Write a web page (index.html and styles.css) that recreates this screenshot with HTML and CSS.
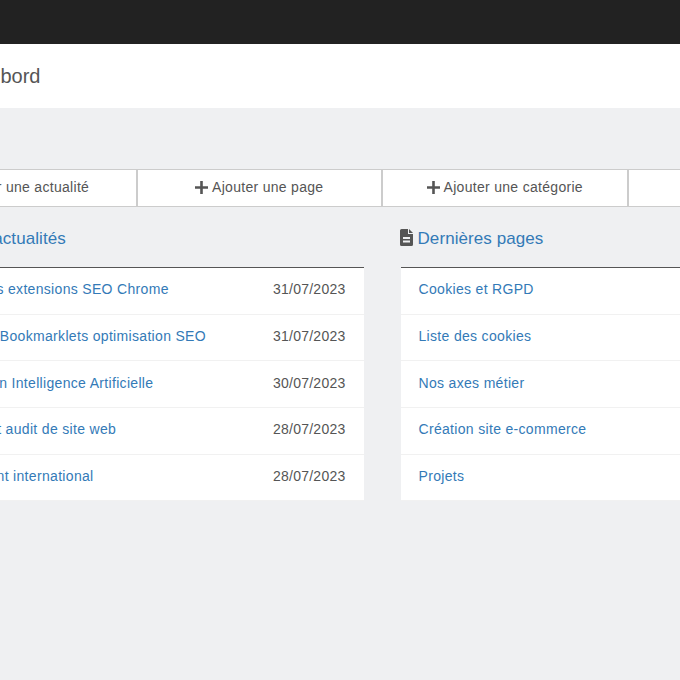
FILE: index.html
```html
<!DOCTYPE html>
<html lang="fr">
<head>
<meta charset="utf-8">
<title>Tableau de bord</title>
<link rel="stylesheet" href="styles.css">
</head>
<body>
<div class="topbar"></div>
<header class="pagehead"><h1>Tableau de bord</h1></header>
<main class="content">
  <div class="actions">
    <a class="action"><svg class="plus" viewBox="0 0 14 14"><path d="M5.600 0h2.800v5.600H14v2.800H8.400V14H5.600V8.400H0V5.600h5.600z"/></svg>Ajouter une actualité</a>
    <a class="action"><svg class="plus" viewBox="0 0 14 14"><path d="M5.600 0h2.800v5.600H14v2.800H8.400V14H5.600V8.400H0V5.600h5.600z"/></svg>Ajouter une page</a>
    <a class="action"><svg class="plus" viewBox="0 0 14 14"><path d="M5.600 0h2.800v5.600H14v2.800H8.400V14H5.600V8.400H0V5.600h5.600z"/></svg>Ajouter une catégorie</a>
    <a class="action"><svg class="plus" viewBox="0 0 14 14"><path d="M5.600 0h2.800v5.600H14v2.800H8.400V14H5.600V8.400H0V5.600h5.600z"/></svg>Ajouter un média</a>
  </div>
  <div class="columns">
    <section>
      <h2><svg class="news" viewBox="0 0 19 15"><path d="M2 1h17v14H2a2 2 0 0 1-2-2V4h2zM5 4v3h5V4zM12 4v1h5V4zM5 9v1h12V9zM5 11v1h12v-1z" fill-rule="evenodd"/></svg>Dernières actualités</h2>
      <ul class="list">
        <li><a>Les meilleures extensions SEO Chrome</a><time>31/07/2023</time></li>
        <li><a>Les meilleurs Bookmarklets optimisation SEO</a><time>31/07/2023</time></li>
        <li><a>Nouveautés en Intelligence Artificielle</a><time>30/07/2023</time></li>
        <li><a>Diagnostics et audit de site web</a><time>28/07/2023</time></li>
        <li><a>Référencement international</a><time>28/07/2023</time></li>
      </ul>
    </section>
    <section>
      <h2><svg class="doc" viewBox="0 0 13 17"><path fill-rule="evenodd" d="M0 1.500A1.500 1.500 0 0 1 1.500 0H8v5h5v10.500a1.500 1.500 0 0 1-1.500 1.500h-10A1.500 1.500 0 0 1 0 15.500zM9 0l4 4H9zM3 8v2h7V8zM3 11.500v2h7v-2z"/></svg>Dernières pages</h2>
      <ul class="list">
        <li><a>Cookies et RGPD</a></li>
        <li><a>Liste des cookies</a></li>
        <li><a>Nos axes métier</a></li>
        <li><a>Création site e-commerce</a></li>
        <li><a>Projets</a></li>
      </ul>
    </section>
  </div>
</main>
</body>
</html>
```
FILE: styles.css
```css
html, body { margin: 0; padding: 0; }
body {
  background: #eff0f2;
  font-family: "Liberation Sans", Arial, sans-serif;
  font-size: 14px;
  color: #555;
  height: 680px;
  overflow: hidden;
}
.topbar { height: 44px; background: #222; }
.pagehead { height: 64px; background: #fff; display: flex; align-items: center; }
.pagehead h1 { margin: 0 0 0 -103px; font-size: 20px; font-weight: 400; color: #555; white-space: nowrap; }
.content { margin-left: -109px; width: 982px; padding-top: 61px; }
.actions { display: grid; grid-template-columns: repeat(4, 1fr); }
.action {
  height: 38px;
  box-sizing: border-box;
  padding-bottom: 2px;
  background: #fff;
  border: 1px solid #ccc;
  display: flex;
  align-items: center;
  justify-content: center;
  color: #555;
  letter-spacing: 0.3px;
}
.plus { width: 13px; height: 13px; margin-right: 4px; fill: #555; }
.columns { display: grid; grid-template-columns: 1fr 1fr; gap: 37px; }
h2 {
  margin: 0;
  height: 60px;
  box-sizing: border-box;
  padding-top: 3px;
  font-size: 17px;
  line-height: 20px;
  font-weight: 400;
  letter-spacing: 0.08px;
  color: #337ab7;
  white-space: nowrap;
  display: flex;
  align-items: center;
}
.doc { width: 13px; height: 17px; margin: 0 5px 2px -1px; fill: #555; }
.news { width: 19px; height: 15px; margin: 0 5px 0 -1px; fill: #555; }
.list { margin: 0; padding: 0; list-style: none; background: #fff; border-top: 1px solid #555; }
.list li {
  height: 46.700px;
  box-sizing: border-box;
  padding: 0 18px 3px 18px;
  display: flex;
  align-items: center;
  justify-content: space-between;
  border-bottom: 1px solid #f1f1f1;
}
.list a { color: #337ab7; white-space: nowrap; letter-spacing: 0.32px; }
.list time { color: #555; letter-spacing: 0.25px; }
```
